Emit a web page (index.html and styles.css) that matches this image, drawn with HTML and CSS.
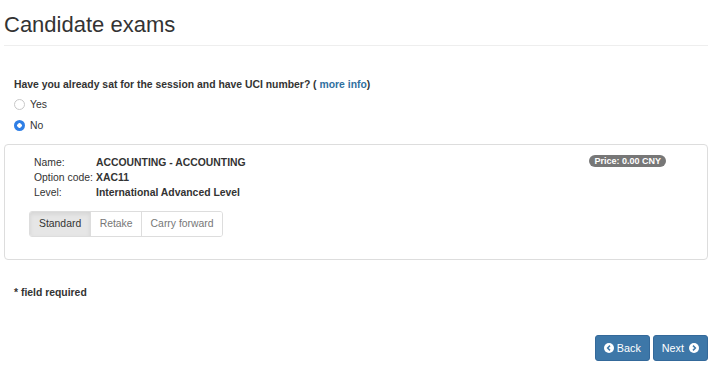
FILE: index.html
```html
<!DOCTYPE html>
<html>
<head>
<meta charset="utf-8">
<link rel="stylesheet" href="styles.css">
</head>
<body>
<div class="page">
  <h1 class="title">Candidate exams</h1>
  <div class="content">
    <p class="question">Have you already sat for the session and have UCI number? ( <a class="link" href="#">more info</a>)</p>
    <label class="radio"><span class="radio-dot"></span>Yes</label>
    <label class="radio"><span class="radio-dot checked"></span>No</label>
  </div>
  <div class="card">
    <div class="card-row">
      <div class="details">
        <div class="detail"><span class="dl">Name:</span><span class="dv">ACCOUNTING - ACCOUNTING</span></div>
        <div class="detail"><span class="dl">Option code:</span><span class="dv">XAC11</span></div>
        <div class="detail"><span class="dl">Level:</span><span class="dv">International Advanced Level</span></div>
        <div class="btn-group">
          <span class="seg active">Standard</span>
          <span class="seg">Retake</span>
          <span class="seg">Carry forward</span>
        </div>
      </div>
      <div class="price"><span class="badge">Price: 0.00 CNY</span></div>
    </div>
  </div>
  <p class="required">* field required</p>
  <div class="actions">
    <button class="btn"><svg class="ico" viewBox="0 0 16 16"><circle cx="8" cy="8" r="8" fill="#fff"/><path d="M9.6 4.2 L5.8 8 L9.6 11.8" stroke="#3d77a8" stroke-width="2.4" fill="none"/></svg>Back</button>
    <button class="btn">Next<svg class="ico right" viewBox="0 0 16 16"><circle cx="8" cy="8" r="8" fill="#fff"/><path d="M6.4 4.2 L10.2 8 L6.4 11.8" stroke="#3d77a8" stroke-width="2.4" fill="none"/></svg></button>
  </div>
</div>
</body>
</html>
```
FILE: styles.css
```css
* { box-sizing: border-box; }
body {
  margin: 0;
  font-family: "Liberation Sans", Arial, sans-serif;
  color: #333;
  background: #fff;
}
.page { width: 723px; }
.title {
  margin: 0 15px 0 4px;
  padding: 13px 0 8px;
  font-size: 22px;
  font-weight: normal;
  line-height: 24px;
  border-bottom: 1px solid #eee;
}
.content { padding: 0 14px; }
.question {
  margin: 32px 0 0;
  font-size: 10.4px;
  font-weight: bold;
  line-height: 14px;
}
.link { color: #31709f; text-decoration: none; }
.radio {
  display: flex;
  align-items: center;
  font-size: 10.4px;
  height: 13px;
  margin-top: 6px;
}
.radio + .radio { margin-top: 8px; }
.radio-dot {
  width: 11px;
  height: 11px;
  border-radius: 50%;
  border: 1px solid #c8c8c8;
  margin-right: 5px;
  background: #fff;
}
.radio-dot.checked {
  border: none;
  background: radial-gradient(circle, #fff 0 2px, #2f7fe6 2.5px);
}
.card {
  margin: 12px 15px 0 4px;
  border: 1px solid #ddd;
  border-radius: 4px;
  padding: 10px 41px 21px 29px;
  height: 116px;
}
.card-row { display: flex; justify-content: space-between; align-items: flex-start; }
.detail {
  display: flex;
  font-size: 10.4px;
  line-height: 15px;
  white-space: nowrap;
}
.dl { width: 62px; flex: none; }
.dv { font-weight: bold; }
.btn-group {
  display: inline-flex;
  margin-top: 11px;
  margin-left: -5px;
  border: 1px solid #ddd;
  border-radius: 3px;
  overflow: hidden;
}
.seg {
  font-size: 10.4px;
  line-height: 24px;
  padding: 0 8.5px;
  color: #777;
  background: #fff;
}
.seg + .seg { border-left: 1px solid #ddd; }
.seg.active {
  padding: 0 9px;
  color: #333;
  background: #e6e6e6;
  box-shadow: inset 0 2px 4px rgba(0,0,0,.08);
}
.price { display: flex; }
.badge {
  display: inline-block;
  background: #777;
  color: #fff;
  font-size: 9px;
  font-weight: bold;
  line-height: 12px;
  padding: 0 5px;
  border-radius: 7px;
}
.required {
  margin: 26px 0 0 14px;
  font-size: 10.4px;
  font-weight: bold;
  line-height: 14px;
}
.actions {
  display: flex;
  justify-content: flex-end;
  gap: 3px;
  margin: 35px 15px 0 0;
}
.btn {
  display: inline-flex;
  align-items: center;
  height: 26px;
  padding: 0 8px;
  background: #3d77a8;
  border: 1px solid #34699a;
  border-radius: 3px;
  color: #fff;
  font-family: "Liberation Sans", Arial, sans-serif;
  font-size: 10.8px;
}
.ico { width: 10px; height: 10px; margin-right: 3px; }
.ico.right { margin: 0 0 0 5px; }
```
